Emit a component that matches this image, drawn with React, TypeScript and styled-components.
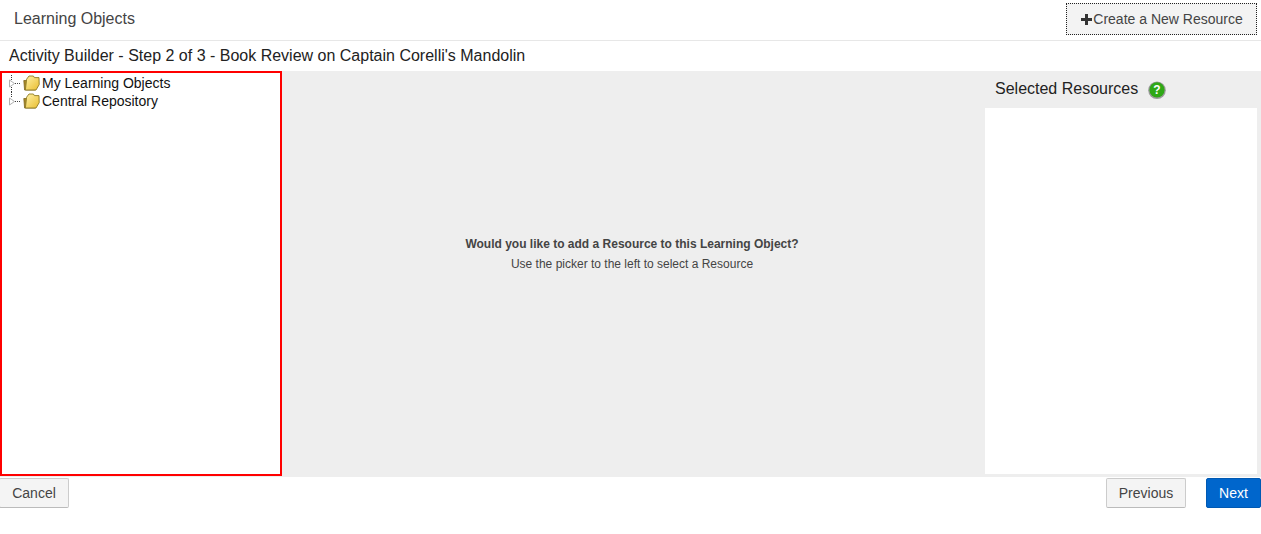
import React from "react";
import styled, { createGlobalStyle } from "styled-components";

const Global = createGlobalStyle`
  html, body { margin: 0; padding: 0; background: #fff; }
  body { font-family: "Liberation Sans", Arial, sans-serif; color: #333; }
`;
const Page = styled.div`
  width: 1261px; height: 534px; display: flex; flex-direction: column; overflow: hidden;
`;
const TopBar = styled.header`
  height: 41px; box-sizing: border-box; display: flex; align-items: center; justify-content: space-between;
  padding: 3px 4px 5px 14px; border-bottom: 1px solid #e7e7e7;
`;
const PageTitle = styled.div`font-size: 16px; color: #444;`;
const CreateButton = styled.button`
  width: 191px; height: 32px; box-sizing: border-box; padding: 0; display: flex; align-items: center; justify-content: center;
  border: 1px dotted #222; background: #f3f3f3; color: #444;
  font: 14px "Liberation Sans", Arial, sans-serif;
`;
const StepTitle = styled.h1`
  margin: 0; height: 30px; padding-left: 9px; font-size: 16px; font-weight: 400; line-height: 30px; color: #222;
`;
const Workspace = styled.main`
  height: 406px; display: grid; grid-template-columns: 282px 1fr 279px; background: #eee;
`;
const TreePanel = styled.nav`
  box-sizing: border-box; border: 2px solid #f00; background: #fff; padding: 1px 0 0 6px; margin-bottom: 1px;
`;
const TreeRow = styled.div`
  height: 18px; display: flex; align-items: center; font-size: 14px; color: #111;
`;
const Expander = styled.svg`width: 14px; height: 18px; flex: none;`;
const Folder = styled.svg`width: 17px; height: 16px; flex: none; margin: 0 2px 0 1px;`;
const Prompt = styled.section`
  display: flex; flex-direction: column; align-items: center; justify-content: center;
  padding: 0 0 40px 0; font-size: 12px; color: #444; gap: 7px; line-height: 13px;
`;
const Side = styled.aside`
  display: flex; flex-direction: column; padding: 0 4px 3px 3px;
`;
const SideHead = styled.div`
  height: 37px; box-sizing: border-box; padding: 0 0 2px 10px; display: flex; align-items: center; gap: 10px; font-size: 16px; color: #222;
`;
const Help = styled.svg`width: 18px; height: 18px; margin-top: 2px;`;
const SideBody = styled.div`flex: 1; background: #fff;`;
const Footer = styled.footer`
  display: flex; justify-content: space-between; padding-top: 1px; margin-left: -1px;
`;
const Group = styled.div`display: flex; gap: 20px;`;
const Btn = styled.button<{ $primary?: boolean; $w: number }>`
  width: ${p => p.$w}px; height: 30px; box-sizing: border-box; padding: 0;
  border: 1px solid ${p => (p.$primary ? "#0059b3" : "#ccc")};
  border-bottom-color: ${p => (p.$primary ? "#0059b3" : "#bbb")};
  border-radius: 2px; background: ${p => (p.$primary ? "#0066cc" : "#f4f4f4")};
  color: ${p => (p.$primary ? "#fff" : "#444")};
  font: 14px "Liberation Sans", Arial, sans-serif;
`;

const Arrow = ({ first }: { first?: boolean }) => (
  <Expander viewBox="0 0 14 18">
    <path d={first ? "M3.5 1V6M3.5 13V18" : "M3.5 0V6"} stroke="#333" strokeDasharray="1 1" fill="none" />
    <path d="M7 9.5H12" stroke="#444" strokeDasharray="1 1" fill="none" />
    <path d="M1.5 6L6.5 9.5L1.5 13Z" fill="#fff" stroke="#b0b0b0" />
  </Expander>
);
const FolderIcon = ({ id }: { id: string }) => (
  <Folder viewBox="0 0 17 16">
    <defs>
      <linearGradient id={id} x1="0" y1="0" x2="1" y2="1">
        <stop offset="0" stopColor="#fff2a8" />
        <stop offset="1" stopColor="#e9bd2f" />
      </linearGradient>
    </defs>
    <path d="M.8 5.5L1.6 15H12.5L13 5.5Z" fill="#a98a28" stroke="#7d6620" strokeWidth=".8" />
    <path d="M3.6 4.2L6 1H10.4L11.4 2.6H16L16.2 9.6L13 15H2.4Z" fill={`url(#${id})`} stroke="#8f7a24" strokeWidth=".9" />
  </Folder>
);

export default function App() {
  return (
    <Page>
      <Global />
      <TopBar>
        <PageTitle>Learning Objects</PageTitle>
        <CreateButton>
          <svg width="13" height="13" viewBox="0 0 13 13"><path d="M5 1h3v4h4v3H8v4H5V8H1V5h4z" fill="#333" /></svg>
          Create a New Resource
        </CreateButton>
      </TopBar>
      <StepTitle>Activity Builder - Step 2 of 3 - Book Review on Captain Corelli's Mandolin</StepTitle>
      <Workspace>
        <TreePanel>
          <TreeRow><Arrow first /><FolderIcon id="fa" />My Learning Objects</TreeRow>
          <TreeRow><Arrow /><FolderIcon id="fb" />Central Repository</TreeRow>
        </TreePanel>
        <Prompt>
          <strong>Would you like to add a Resource to this Learning Object?</strong>
          <span>Use the picker to the left to select a Resource</span>
        </Prompt>
        <Side>
          <SideHead>
            Selected Resources
            <Help viewBox="0 0 18 18">
              <circle cx="9" cy="9.2" r="8.8" fill="#9a9a9a" />
              <circle cx="9" cy="8.8" r="7.6" fill="#2fa816" />
              <text x="9" y="13" textAnchor="middle" fontSize="12" fontWeight="700" fill="#fff" fontFamily="Liberation Sans">?</text>
            </Help>
          </SideHead>
          <SideBody />
        </Side>
      </Workspace>
      <Footer>
        <Btn $w={70}>Cancel</Btn>
        <Group>
          <Btn $w={80}>Previous</Btn>
          <Btn $w={55} $primary>Next</Btn>
        </Group>
      </Footer>
    </Page>
  );
}
